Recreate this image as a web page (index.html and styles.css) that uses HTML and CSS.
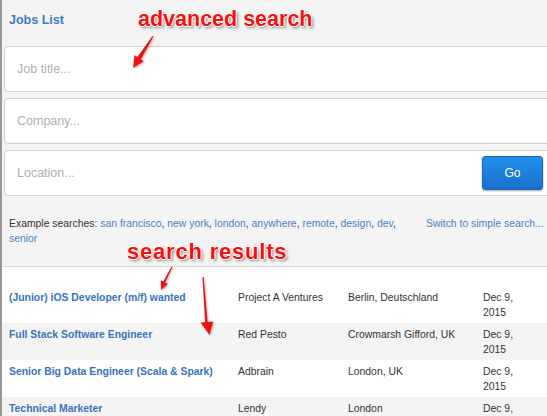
FILE: index.html
```html
<!DOCTYPE html>
<html lang="en">
<head>
<meta charset="utf-8">
<title>Jobs List</title>
<link rel="stylesheet" href="styles.css">
</head>
<body>
<div class="page">
  <div class="top">
    <div class="header"><a class="brand" href="#">Jobs List</a></div>
    <div class="fields">
      <div class="field"><input class="inp" type="text" placeholder="Job title..."></div>
      <div class="field"><input class="inp" type="text" placeholder="Company..."></div>
      <div class="field"><input class="inp" type="text" placeholder="Location..."><button class="go" type="button">Go</button></div>
    </div>
    <div class="examples">
      <div class="ex-left">Example searches: <a href="#">san francisco</a>, <a href="#">new york</a>, <a href="#">london</a>, <a href="#">anywhere</a>, <a href="#">remote</a>, <a href="#">design</a>, <a href="#">dev</a>, <a href="#">senior</a></div>
      <a class="ex-right" href="#">Switch to simple search...</a>
    </div>
  </div>
  <div class="results">
    <div class="row">
      <a class="c-title" href="#">(Junior) iOS Developer (m/f) wanted</a>
      <span class="c-co">Project A Ventures</span>
      <span class="c-loc">Berlin, Deutschland</span>
      <span class="c-date">Dec 9, 2015</span>
    </div>
    <div class="row alt">
      <a class="c-title" href="#">Full Stack Software Engineer</a>
      <span class="c-co">Red Pesto</span>
      <span class="c-loc">Crowmarsh Gifford, UK</span>
      <span class="c-date">Dec 9, 2015</span>
    </div>
    <div class="row">
      <a class="c-title" href="#">Senior Big Data Engineer (Scala &amp; Spark)</a>
      <span class="c-co">Adbrain</span>
      <span class="c-loc">London, UK</span>
      <span class="c-date">Dec 9, 2015</span>
    </div>
    <div class="row alt">
      <a class="c-title" href="#">Technical Marketer</a>
      <span class="c-co">Lendy</span>
      <span class="c-loc">London</span>
      <span class="c-date">Dec 9, 2015</span>
    </div>
  </div>

  <div class="note note-adv">advanced search</div>
  <div class="note note-res">search results</div>
  <svg class="arrows" width="547" height="416" viewBox="0 0 547 416" xmlns="http://www.w3.org/2000/svg">
    <g fill="#f01010">
      <polygon points="153.5,36.6 140.9,59.2 143.6,61.3 133,68 134.6,55.1 137.4,57 152.5,36"/>
      <polygon points="172.6,267 165.2,282.5 167.8,284 161,290 160.8,280.2 163.3,281.5 171.6,266.6"/>
      <polygon points="203.7,277 207.6,322 213.2,321.6 209.5,335 200.6,322.6 205.2,322.2 202.5,277.1"/>
    </g>
  </svg>
</div>
</body>
</html>
```

FILE: styles.css
```css
html, body {
  margin: 0;
  padding: 0;
  height: 100%;
  overflow: hidden;
}
body {
  font-family: "Liberation Sans", Arial, sans-serif;
  background: #ffffff;
  color: #333333;
}
.page {
  position: relative;
  min-height: 100vh;
  border-left: 2px solid #979797;
  box-sizing: border-box;
  background: #ffffff;
}
.top {
  background: #f4f4f4;
  border-bottom: 1px solid #dadada;
}
.header {
  height: 46px;
  line-height: 37px;
  padding-left: 7px;
}
.brand {
  font-size: 12.5px;
  font-weight: bold;
  color: #3b7bc6;
  text-decoration: none;
}
.fields {
  display: flex;
  flex-direction: column;
  gap: 6px;
  margin-left: 2px;
  width: 552px;
}
.field {
  box-sizing: border-box;
  height: 46px;
  border: 1px solid #cfcfcf;
  border-radius: 4px;
  background: #ffffff;
  display: flex;
  align-items: center;
  padding: 0 12px 0 12px;
}
.inp {
  flex: 1;
  border: 0;
  outline: 0;
  background: transparent;
  font-family: "Liberation Sans", Arial, sans-serif;
  font-size: 12.5px;
  color: #333;
  padding: 0;
  margin: 0;
}
.inp::placeholder {
  color: #b0b0b0;
}
.go {
  width: 61px;
  height: 34px;
  border: 1px solid #1766c2;
  border-radius: 3px;
  background: linear-gradient(#2090ec, #1a6fcb);
  color: #ffffff;
  font-family: "Liberation Sans", Arial, sans-serif;
  font-size: 12px;
  box-shadow: 0 1px 2px rgba(0, 0, 0, 0.35);
  padding: 0;
}
.examples {
  display: flex;
  padding: 20px 0 20px 7px;
  font-size: 10.4px;
  line-height: 15px;
  white-space: nowrap;
}
.ex-left {
  width: 400px;
  white-space: normal;
  color: #333333;
}
.ex-left a, .ex-right {
  color: #4f7fc4;
  text-decoration: none;
}
.ex-right {
  margin-left: 17px;
}
.results {
  padding-top: 19px;
}
.row {
  display: grid;
  grid-template-columns: 229px 110px 135px 45px;
  padding: 4px 0 3px 7px;
  font-size: 10.4px;
  line-height: 15px;
  color: #333333;
  align-items: start;
}
.row.alt {
  background: #f4f4f4;
}
.c-title {
  color: #3674bd;
  font-weight: bold;
  text-decoration: none;
}
.note {
  position: absolute;
  font-family: "Liberation Sans", Arial, sans-serif;
  font-weight: bold;
  font-size: 21.5px;
  line-height: 24px;
  color: #f41010;
  white-space: nowrap;
  text-shadow: 1px 0 0 #fff, -1px 0 0 #fff, 0 1px 0 #fff, 0 -1px 0 #fff, 2px 2px 3px rgba(0, 0, 0, 0.45);
}
.note-adv {
  left: 136px;
  top: 7px;
}
.note-res {
  left: 125px;
  top: 240px;
  font-size: 22px;
  letter-spacing: 0.8px;
}
.arrows {
  position: absolute;
  left: -2px;
  top: 0;
  pointer-events: none;
  filter: drop-shadow(1px 1px 1px rgba(0, 0, 0, 0.3));
}
```
